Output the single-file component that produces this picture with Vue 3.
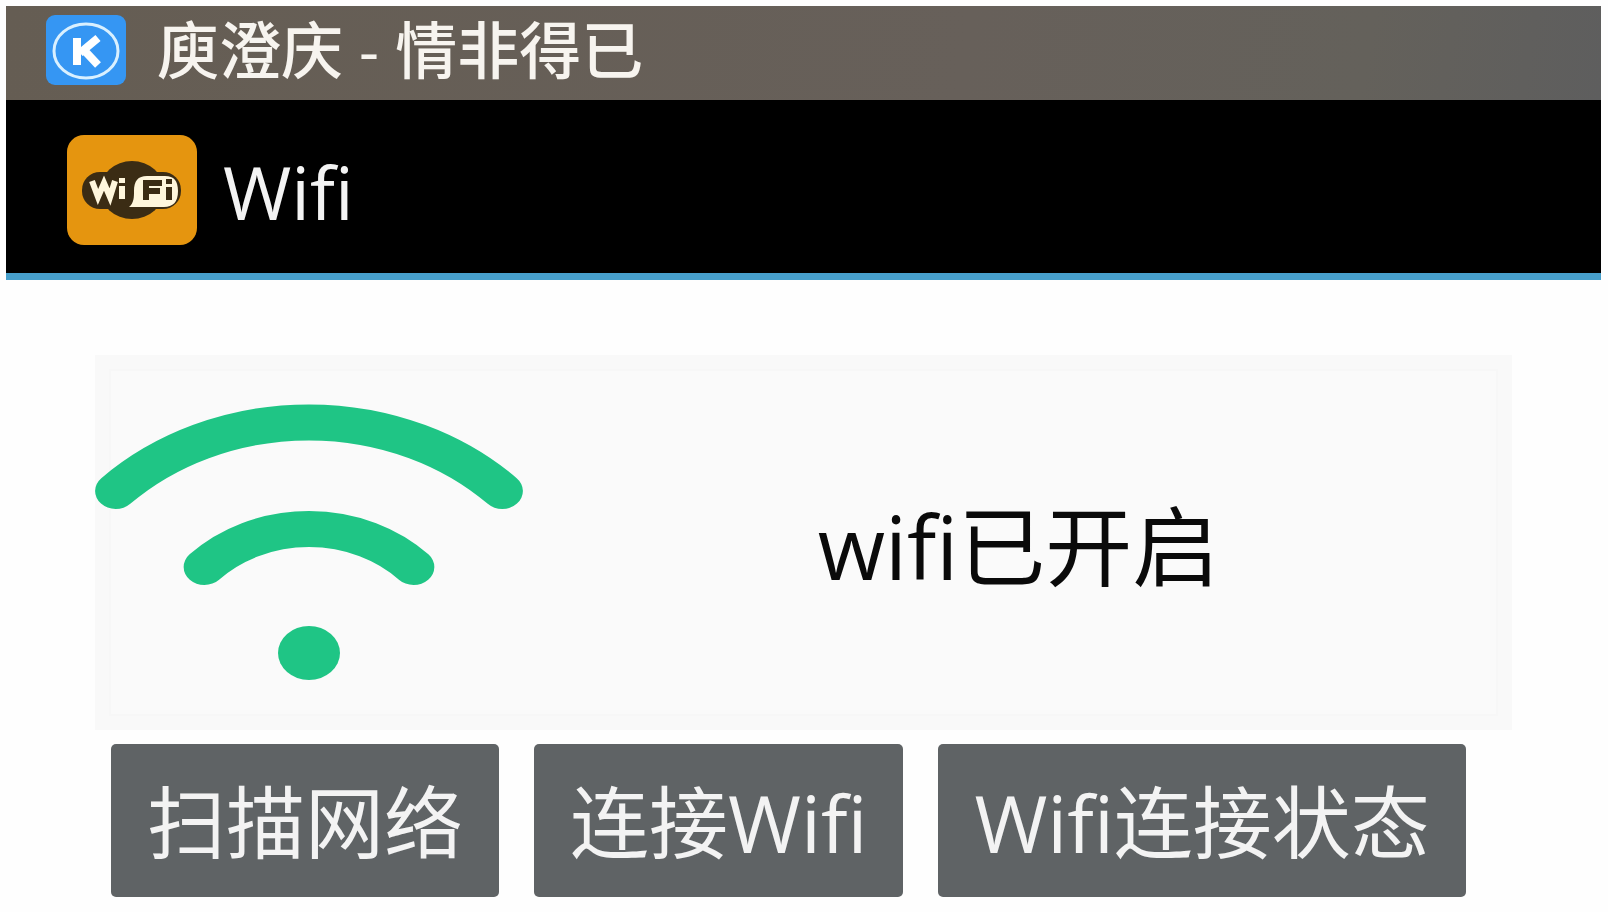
<script setup>
import { ref } from 'vue'

const track = ref('庾澄庆 - 情非得已')
const status = ref('wifi已开启')
const actions = ['扫描网络', '连接Wifi', 'Wifi连接状态']
</script>

<template>
  <div class="screen">
    <div class="status-bar">
      <svg class="music-icon" viewBox="0 0 80 70" aria-hidden="true">
        <rect width="80" height="70" rx="9" fill="#3596f3" />
        <ellipse cx="40" cy="36" rx="32" ry="27" fill="none" stroke="#d9f0ff" stroke-width="3" />
        <path d="M31 23V50M52 23L34 38M37 34L52 50" fill="none" stroke="#fff" stroke-width="8" />
      </svg>
      <span class="track">{{ track }}</span>
    </div>
    <header class="action-bar">
      <svg class="app-icon" viewBox="0 0 130 110" aria-hidden="true">
        <rect width="130" height="110" rx="17" fill="#e5950f" />
        <ellipse cx="65" cy="55" rx="32" ry="29" fill="#3b2c14" />
        <rect x="15" y="37" width="99" height="37" rx="18" fill="#3b2c14" />
        <path d="M62 72C67 68 67 62 67 56C67 46 71 41 80 41H98C107 41 111 46 111 56C111 67 106 72 97 72Z" fill="#fff6dc" />
        <path d="M25 46L31 62L37 48L43 62L48 46M55 51V64" fill="none" stroke="#fff6dc" stroke-width="6" />
        <rect x="52" y="43" width="6" height="5" fill="#fff6dc" />
        <path d="M79 65V48H95M79 56H93M102 52V65" fill="none" stroke="#3b2c14" stroke-width="6" />
        <rect x="99" y="44" width="6" height="5" fill="#3b2c14" />
      </svg>
      <h1 class="title">Wifi</h1>
    </header>
    <main class="content">
      <section class="panel">
        <svg class="signal" viewBox="0 0 430 278" aria-hidden="true">
          <g transform="translate(214 0) scale(1.15 1)" fill="none" stroke="#1fc585" stroke-width="36" stroke-linecap="round">
            <path d="M-168 87A240 240 0 0 1 168 87" />
            <path d="M-91 163A128 128 0 0 1 91 163" />
          </g>
          <ellipse cx="214" cy="249" rx="31" ry="27" fill="#1fc585" />
        </svg>
        <p class="status">{{ status }}</p>
      </section>
      <div class="actions">
        <button v-for="label in actions" :key="label" type="button">{{ label }}</button>
      </div>
    </main>
  </div>
</template>

<style>
body {
  background: #fefefe;
}
</style>

<style scoped>
.screen {
  padding: 6px 7px 15px 6px;
  font-family: "Open Sans", "Noto Sans CJK SC", sans-serif;
  font-variant-ligatures: none;
}

.status-bar {
  display: flex;
  align-items: center;
  gap: 31px;
  height: 94px;
  padding: 0 40px 6px;
  box-sizing: border-box;
  background: linear-gradient(100deg, #655d53, #67605a 60%, #64615b 85%, #5e5e5e);
}

.music-icon {
  width: 80px;
  height: 70px;
  flex: none;
}

.track {
  font-size: 62px;
  line-height: 88px;
  font-weight: 500;
  color: #f7f4ef;
  white-space: nowrap;
}

.action-bar {
  display: flex;
  align-items: center;
  gap: 26px;
  height: 180px;
  padding: 6px 61px 0;
  box-sizing: border-box;
  background: #000;
  border-bottom: 7px solid #479fcb;
}

.app-icon {
  width: 130px;
  height: 110px;
  flex: none;
}

.title {
  margin: 0;
  padding-top: 4px;
  font-size: 74px;
  line-height: 100px;
  font-weight: 400;
  color: #f3f3f3;
}

.content {
  padding: 75px 89px 0;
}

.panel {
  display: flex;
  align-items: center;
  min-height: 375px;
  background: #fafafa;
  box-shadow: inset 0 0 0 14px #f9f9f9, inset 0 0 0 16px #f7f7f7;
}

.signal {
  width: 430px;
  height: 278px;
  flex: none;
}

.status {
  flex: 1;
  margin: 0;
  padding-top: 6px;
  font-size: 87px;
  line-height: 120px;
  text-align: center;
  color: #0a0a0a;
}

.actions {
  display: flex;
  gap: 35px;
  padding: 14px 16px 0;
}

.actions button {
  height: 153px;
  padding: 4px 36px 0;
  border: 0;
  border-radius: 5px;
  background: #5f6365;
  color: #f3f3f3;
  font: inherit;
  font-size: 79px;
  line-height: 110px;
  white-space: nowrap;
}
</style>
